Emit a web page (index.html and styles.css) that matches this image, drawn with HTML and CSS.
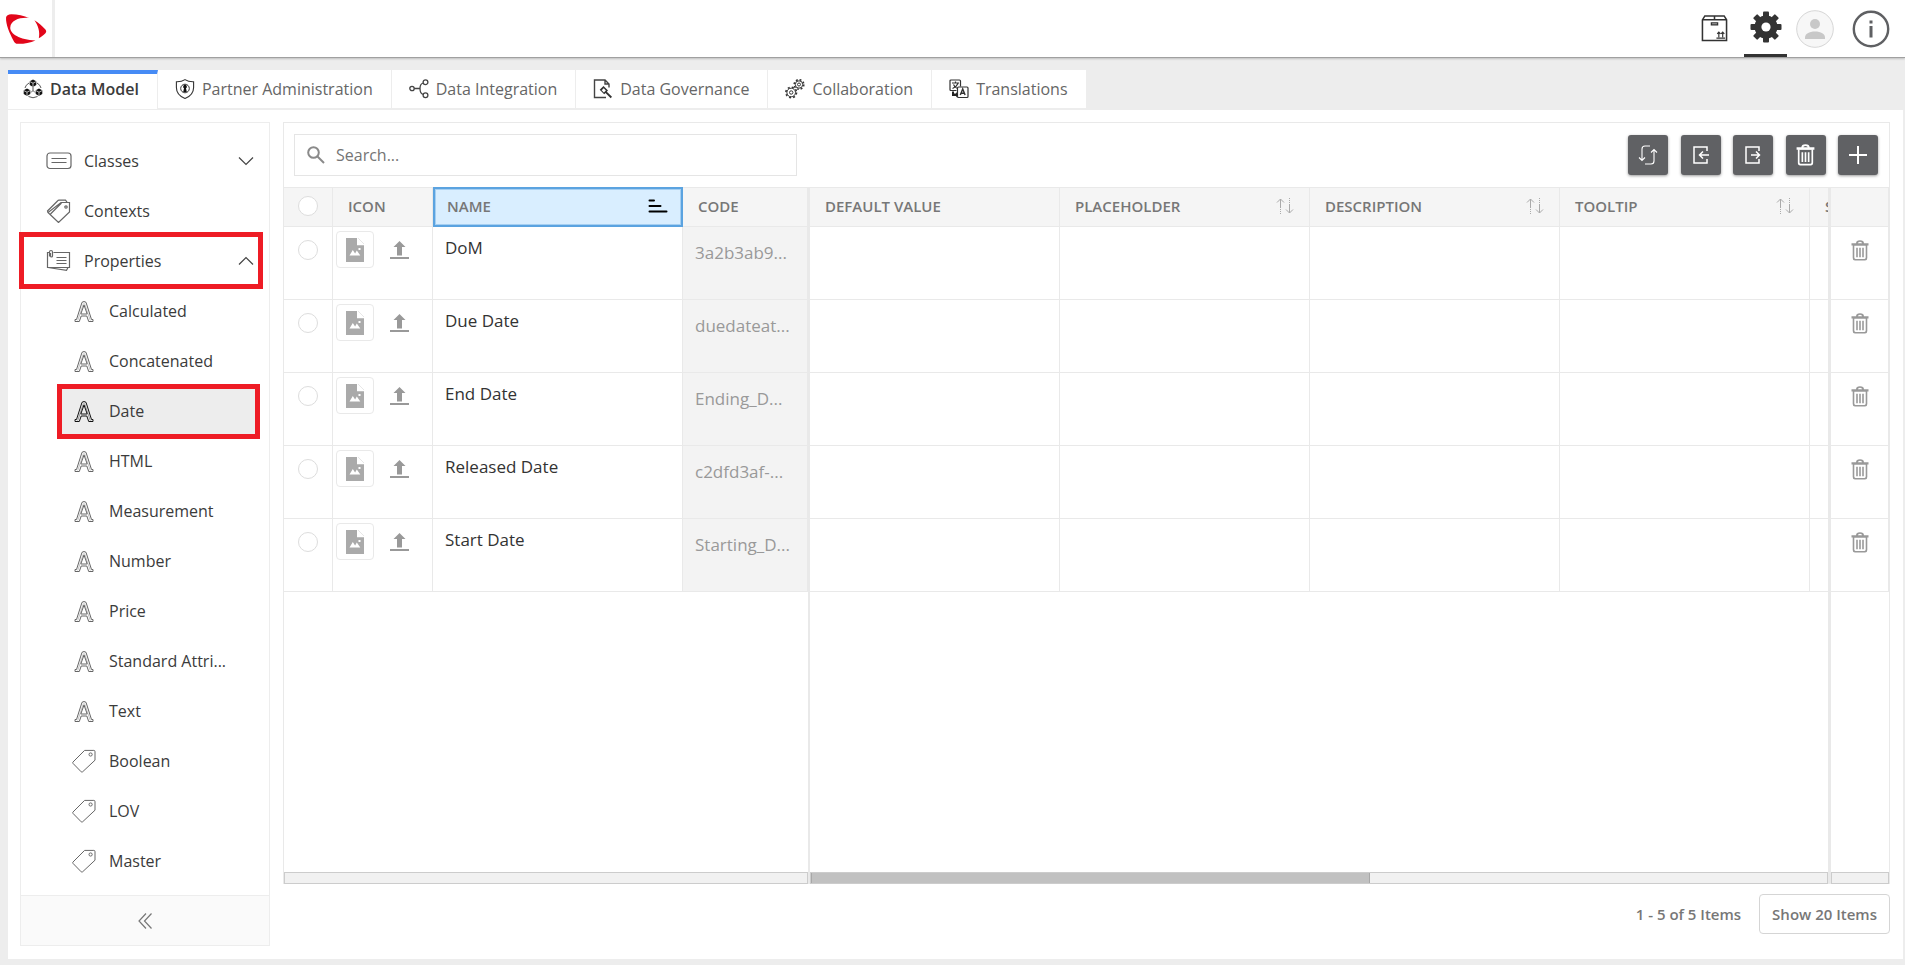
FILE: index.html
```
<!DOCTYPE html>
<html lang="en">
<head>
  <meta charset="UTF-8">
  <meta name="viewport" content="width=device-width, initial-scale=1.0">
  <title>Data Model - Properties</title>
  <link rel="stylesheet" href="styles.css">
</head>
<body>

  <!-- shared icons -->
  <svg class="sprite" aria-hidden="true">
    <symbol id="i-letter" viewBox="0 0 19 21">
      <path d="M7.5 1.3Q9.500-.3 11.500 1.300L17 18.500h1.500v2h-4.300l-1.900-5.500H6.700l-1.900 5.500H.5v-2H2z"/>
      <path d="M9.500 4L6.300 13h6.400z"/>
      <path d="M3.200 19.500L9 2.500M15.800 19.500L10 2.500" stroke-width=".4"/>
    </symbol>
    <symbol id="i-tag" viewBox="0 0 24 24">
      <path d="M12.6 1.4h9.2q1.2 0 1.2 1.2v8.6L10.6 22.8q-.7.6-1.4 0L1 14.4q-.6-.7 0-1.4z"/>
      <circle cx="18.6" cy="5.5" r="1.6"/>
    </symbol>
    <symbol id="i-trash" viewBox="0 0 18 21">
      <path class="solid" d="M.5 3.2h17v2.4H.5zM5 3.4Q5 .2 9 .2t4 3.2h-1.8Q11 1.8 9 1.8T6.8 3.4z"/>
      <path class="solid" fill-rule="evenodd" d="M1.700 5h14.600v13q0 2.500-2.300 2.500H4Q1.700 20.500 1.700 18zM3.300 5.600v12q0 1.300 1.200 1.300h9q1.200 0 1.200-1.300v-12z"/>
      <path class="solid" d="M5.200 7.800h1.600v9.400H5.200zM8.200 7.800h1.600v9.400H8.200zM11.200 7.800h1.600v9.400h-1.600z"/>
    </symbol>
    <symbol id="i-sort" viewBox="0 0 18 16">
      <path d="M4.5 1v9M1 4.5L4.5 1 8 4.5M13.5 6v9M10 11.5l3.500 3.500 3.500-3.500"/>
      <path d="M4.5 11v5M13.5 0v6" stroke-dasharray="1 1"/>
    </symbol>
    <symbol id="i-picture" viewBox="0 0 18 24">
      <path fill="#aaa" d="M0 0h11v7h7v17H0z"/>
      <path fill="#aaa" d="M12 0l6 6h-6z"/>
      <path fill="#fff" d="M11 0h1l6 6v1.200h-7zM3.500 17.500l3.300-5.500 2.300 3.500 1.700-3 3.500 5zM12.500 10h2v2h-2z"/>
    </symbol>
    <symbol id="i-upload" viewBox="0 0 19 18">
      <path fill="#999" d="M0 16h19v2H0zM9.500 0l6 6H12v8.500H7V6H3.500z"/>
    </symbol>
  </svg>

  <header class="topbar">
    <a class="logo" href="#" aria-label="Home">
      <svg width="42" height="30" viewBox="0 0 40 29" preserveAspectRatio="none">
        <path fill="#e2061a" d="M1 3.500C1.200 1.500 3 .2 6 .2c6 0 12 1.300 17 3.600C14 3 5.500 6 5 13c-.3 6 9 12 24 12.500C24 28 17 29 12.500 28.800c-2.500-.1-3.500-1.300-4.500-3.300C4.500 19 .6 10 1 3.500z"/>
        <path fill="#e2061a" d="M28 6c4 2.500 7.500 5.500 10.500 9 1 1.300 1 2.500 0 3.500-2 2-4 3.500-6.300 5C33.500 17 31.500 11 28 6z"/>
      </svg>
    </a>
    <nav class="topbar-actions" aria-label="Account">
      <a href="#" class="top-link" aria-label="Catalog">
        <svg width="27" height="27" viewBox="0 0 28 28" fill="none" stroke="#333" stroke-width="1.6">
          <path d="M1.500 5L4 1h20l2.500 4v21.500h-25zM1.500 5h25M14 1v4"/>
          <rect x="10.800" y="8.200" width="6.400" height="2" stroke-width="1.4"/>
          <path d="M16 24h9M18.500 23v-5M22.500 23v-5M16.800 19.500l1.700-1.800 1.700 1.800M20.800 19.500l1.700-1.800 1.700 1.800" stroke-width="1.2"/>
        </svg>
      </a>
      <a href="#" class="top-link top-link-active" aria-label="Settings">
        <svg width="32" height="32" viewBox="-16 -16 32 32">
          <g fill="#333">
            <rect x="-3" y="-15.500" width="6" height="31" rx="1"/>
            <rect x="-3" y="-15.500" width="6" height="31" rx="1" transform="rotate(45)"/>
            <rect x="-3" y="-15.500" width="6" height="31" rx="1" transform="rotate(90)"/>
            <rect x="-3" y="-15.500" width="6" height="31" rx="1" transform="rotate(135)"/>
            <circle r="11.500"/>
          </g>
          <circle r="4.600" fill="#fff"/>
        </svg>
      </a>
      <a href="#" class="top-link" aria-label="Profile">
        <svg width="38" height="38" viewBox="0 0 38 38">
          <circle cx="19" cy="19" r="18.300" fill="#f7f7f7" stroke="#d6d6d6"/>
          <circle cx="19" cy="14" r="5" fill="#c8c8c8"/>
          <path fill="#c8c8c8" d="M9 29v-1.500c0-3.500 4-6 10-6s10 2.500 10 6V29z"/>
        </svg>
      </a>
      <a href="#" class="top-link" aria-label="Information">
        <svg width="38" height="38" viewBox="0 0 38 38">
          <circle cx="19" cy="19" r="17.200" fill="none" stroke="#5f6063" stroke-width="2.400"/>
          <path fill="#5f6063" d="M17.500 10.500h3v3h-3zM17.500 16h3v11.500h-3z"/>
        </svg>
      </a>
    </nav>
  </header>

  <nav class="tabs" aria-label="Sections">
    <a href="#" class="tab tab-active">
      <svg width="20" height="20" viewBox="0 0 20 20">
        <path fill="none" stroke="#444" stroke-width=".9" d="M6 4Q2.500 6 2 9M14 4q3.500 2 4 5M5.500 17.500q4.500 2.500 9 0M8 13.500l2-2 2 2M10 8v3.500"/>
        <path fill="#111" d="M10 .5l3.300 1.700v3.800L10 8 6.700 6V2.200zM4 9.500l3.300 1.700V15L4 17 .7 15v-3.800zM16 9.500l3.300 1.700V15L16 17l-3.300-2v-3.800z"/>
        <path fill="none" stroke="#fff" stroke-width=".7" d="M6.700 2.500L10 4.200l3.300-1.700M10 4.200V8M.7 11.500L4 13.200l3.300-1.700M4 13.200V17M12.700 11.500l3.300 1.700 3.300-1.700M16 13.200V17"/>
      </svg>
      Data Model
    </a>
    <a href="#" class="tab">
      <svg width="20" height="20" viewBox="0 0 20 20" fill="none" stroke="#333">
        <path d="M10 .6Q13.500 3 18.600 2.800v5.700c0 5.500-3.600 9-8.600 11-5-2-8.600-5.500-8.600-11V2.800Q6.500 3 10 .6z" stroke-width="1.1"/>
        <circle cx="10" cy="9.500" r="4.300"/>
        <path fill="#111" stroke="none" d="M10 5.800a1.900 1.900 0 0 1 1 3.500l.8 3.700H8.200L9 9.300a1.900 1.900 0 0 1 1-3.500z"/>
      </svg>
      Partner Administration
    </a>
    <a href="#" class="tab">
      <svg width="20" height="20" viewBox="0 0 20 20" fill="none" stroke="#444" stroke-width="1.3">
        <circle cx="3" cy="9.500" r="2.200"/>
        <circle cx="16.500" cy="3.200" r="2.400"/>
        <circle cx="16.500" cy="16.300" r="2.400"/>
        <path d="M5.200 9.500H11M14.300 4C11.500 4.800 11 7 11 9.500s.5 5.200 3.300 6"/>
      </svg>
      Data Integration
    </a>
    <a href="#" class="tab">
      <svg width="20" height="20" viewBox="0 0 20 20" fill="none" stroke="#444" stroke-width="1.4">
        <path d="M16 8.500V5l-4-4H1.500v17.500H13M12 1v4h4"/>
        <path fill="#333" stroke="none" d="M10.500 7l4.500 4.500-1.200 1.200 5.200 5-1.300 1.500-5.200-5.200-1.300 1.200-4.500-4.500z"/>
        <path fill="#fff" stroke="none" d="M10.700 9.200l2.200 2.200-2 2-2.200-2.200z"/>
      </svg>
      Data Governance
    </a>
    <a href="#" class="tab">
      <svg width="20" height="20" viewBox="0 0 20 20" fill="none" stroke="#333">
        <circle cx="6.200" cy="13.500" r="4.300"/>
        <circle cx="6.200" cy="13.500" r="5.300" stroke-dasharray="2 2.160" stroke-width="1.600"/>
        <circle cx="6.200" cy="13.500" r="1.700"/>
        <circle cx="14" cy="5.500" r="3.700"/>
        <circle cx="14" cy="5.500" r="4.800" stroke-dasharray="1.900 1.870" stroke-width="1.600"/>
        <circle cx="14" cy="5.500" r="1.500"/>
      </svg>
      Collaboration
    </a>
    <a href="#" class="tab">
      <svg width="20" height="20" viewBox="0 0 20 20" fill="none" stroke="#333">
        <path d="M7.500 11.500H2q-1 0-1-1V2q0-1 1-1h8.500q1 0 1 1v5.500" stroke-width="1.2"/>
        <path d="M3 4h7M6.500 2.500V4M9 4.500Q7.500 8 3.500 9.500M4.500 5.500Q6 8.500 8 9.300" stroke-width="1.2"/>
        <rect x="8.500" y="8" width="10.500" height="10.500" rx="1" stroke-width="1.2"/>
        <path d="M11.300 16l2.400-6 2.400 6M12.200 14.300h3" stroke-width="1.4"/>
        <path fill="#222" stroke="none" d="M3 12.500h2v2h2V13l2 2.700-2 2.700v-1.500H3z"/>
      </svg>
      Translations
    </a>
  </nav>

  <main class="panel">
    <aside class="sidebar">
      <nav class="side-list" aria-label="Data model">
        <a href="#" class="side-item">
          <svg width="26" height="24" viewBox="0 0 26 24"><rect x="1" y="4" width="24" height="15.500" rx="3"/><path d="M5.500 9.500h15M5.500 13.500h15"/></svg>
          <span>Classes</span>
          <svg class="chevron" width="16" height="10" viewBox="0 0 16 10"><path d="M1 1.500l7 7 7-7"/></svg>
        </a>
        <a href="#" class="side-item">
          <svg width="26" height="24" viewBox="0 0 26 24"><path d="M15 3.500h8.500V13L12.500 23.500 2 13.500zM2 13.500L1.500 12 11.500 2q.6-.8 1.500-.8h6.500l1.500 2M4.500 15L15.500 4"/><circle cx="20" cy="8" r="1.200"/></svg>
          <span>Contexts</span>
        </a>
        <a href="#" class="side-item side-item-marked">
          <svg width="26" height="24" viewBox="0 0 26 24"><path d="M7.500 3.500h16v15h-22v-15h2M2 18.500l18.500 2.800 1.500-2.800M10.500 8.500h10M10.500 11.500h10M10.500 14.500h10M3.500 7.500V3q0-1.500 1.500-1.500T6.500 3v4q0 1-1 1t-1-1V4"/></svg>
          <span>Properties</span>
          <svg class="chevron" width="16" height="10" viewBox="0 0 16 10"><path d="M1 8.500l7-7 7 7"/></svg>
        </a>
        <a href="#" class="side-item side-sub"><svg width="26" height="21"><use href="#i-letter"/></svg><span>Calculated</span></a>
        <a href="#" class="side-item side-sub"><svg width="26" height="21"><use href="#i-letter"/></svg><span>Concatenated</span></a>
        <a href="#" class="side-item side-sub side-sub-active"><svg width="26" height="21"><use href="#i-letter"/></svg><span>Date</span></a>
        <a href="#" class="side-item side-sub"><svg width="26" height="21"><use href="#i-letter"/></svg><span>HTML</span></a>
        <a href="#" class="side-item side-sub"><svg width="26" height="21"><use href="#i-letter"/></svg><span>Measurement</span></a>
        <a href="#" class="side-item side-sub"><svg width="26" height="21"><use href="#i-letter"/></svg><span>Number</span></a>
        <a href="#" class="side-item side-sub"><svg width="26" height="21"><use href="#i-letter"/></svg><span>Price</span></a>
        <a href="#" class="side-item side-sub"><svg width="26" height="21"><use href="#i-letter"/></svg><span>Standard Attri...</span></a>
        <a href="#" class="side-item side-sub"><svg width="26" height="21"><use href="#i-letter"/></svg><span>Text</span></a>
        <a href="#" class="side-item side-sub"><svg width="26" height="24"><use href="#i-tag"/></svg><span>Boolean</span></a>
        <a href="#" class="side-item side-sub"><svg width="26" height="24"><use href="#i-tag"/></svg><span>LOV</span></a>
        <a href="#" class="side-item side-sub"><svg width="26" height="24"><use href="#i-tag"/></svg><span>Master</span></a>
      </nav>
      <button class="collapse" aria-label="Collapse sidebar">
        <svg width="14" height="16" viewBox="0 0 14 16"><path d="M8 .5L1 8l7 7.500M13.500.5l-7 7.500 7 7.500"/></svg>
      </button>
    </aside>

    <section class="content">
      <div class="grid-box">
        <div class="toolbar">
          <label class="search">
            <svg width="18" height="18" viewBox="0 0 18 18"><circle cx="6.500" cy="6.500" r="5.300"/><path d="M10.500 10.500l6.500 6.500"/></svg>
            <input type="text" placeholder="Search..." aria-label="Search">
          </label>
          <div class="tools">
            <button class="tool" aria-label="Refresh">
              <svg width="20" height="20" viewBox="0 0 20 20" stroke-width="1.1"><path d="M12 1H7Q4 1 4 4v11.500M1 12.500l3 3 3-3M7 19h6q3 0 3-3V4.500M13 7.500l3-3 3 3"/></svg>
            </button>
            <button class="tool" aria-label="Import">
              <svg width="20" height="20" viewBox="0 0 20 20" stroke-width="1.5"><path d="M16 6V2H3v16h13v-4M18 10H9M12 6.500L8.500 10l3.500 3.500"/></svg>
            </button>
            <button class="tool" aria-label="Export">
              <svg width="20" height="20" viewBox="0 0 20 20" stroke-width="1.5"><path d="M16 6V2H3v16h13v-4M8 10h8.500M13 6.500l3.500 3.500-3.500 3.500"/></svg>
            </button>
            <button class="tool" aria-label="Delete">
              <svg class="trash-light" width="19" height="22"><use href="#i-trash"/></svg>
            </button>
            <button class="tool" aria-label="Add">
              <svg width="20" height="20" viewBox="0 0 20 20" stroke-width="2"><path d="M10 1v18M1 10h18"/></svg>
            </button>
          </div>
        </div>

        <div class="panes">
          <div class="pane pane-left">
            <table class="grid">
              <colgroup><col class="c-check"><col class="c-icon"><col class="c-wide"><col class="c-code"></colgroup>
              <thead>
                <tr>
                  <th class="check"><input type="checkbox" aria-label="Select all"></th>
                  <th>ICON</th>
                  <th class="sorted"><div class="th-inner">NAME
                    <button class="sort" aria-label="Sort by name"><svg width="20" height="14" viewBox="0 0 20 14"><path fill="none" stroke="#000" stroke-width="2" stroke-linecap="round" d="M1.500 1.500h4.500M1.500 7h11M1.500 12.500h17"/></svg></button></div></th>
                  <th>CODE</th>
                </tr>
              </thead>
              <tbody>
                <tr>
                  <td class="check"><input type="checkbox" aria-label="Select DoM"></td>
                  <td class="icons"><div><button class="thumb" aria-label="Icon"><svg width="18" height="24"><use href="#i-picture"/></svg></button><button class="upload" aria-label="Upload"><svg width="19" height="18"><use href="#i-upload"/></svg></button></div></td>
                  <td class="name">DoM</td>
                  <td class="code">3a2b3ab9...</td>
                </tr>
                <tr>
                  <td class="check"><input type="checkbox" aria-label="Select Due Date"></td>
                  <td class="icons"><div><button class="thumb" aria-label="Icon"><svg width="18" height="24"><use href="#i-picture"/></svg></button><button class="upload" aria-label="Upload"><svg width="19" height="18"><use href="#i-upload"/></svg></button></div></td>
                  <td class="name">Due Date</td>
                  <td class="code">duedateat...</td>
                </tr>
                <tr>
                  <td class="check"><input type="checkbox" aria-label="Select End Date"></td>
                  <td class="icons"><div><button class="thumb" aria-label="Icon"><svg width="18" height="24"><use href="#i-picture"/></svg></button><button class="upload" aria-label="Upload"><svg width="19" height="18"><use href="#i-upload"/></svg></button></div></td>
                  <td class="name">End Date</td>
                  <td class="code">Ending_D...</td>
                </tr>
                <tr>
                  <td class="check"><input type="checkbox" aria-label="Select Released Date"></td>
                  <td class="icons"><div><button class="thumb" aria-label="Icon"><svg width="18" height="24"><use href="#i-picture"/></svg></button><button class="upload" aria-label="Upload"><svg width="19" height="18"><use href="#i-upload"/></svg></button></div></td>
                  <td class="name">Released Date</td>
                  <td class="code">c2dfd3af-...</td>
                </tr>
                <tr>
                  <td class="check"><input type="checkbox" aria-label="Select Start Date"></td>
                  <td class="icons"><div><button class="thumb" aria-label="Icon"><svg width="18" height="24"><use href="#i-picture"/></svg></button><button class="upload" aria-label="Upload"><svg width="19" height="18"><use href="#i-upload"/></svg></button></div></td>
                  <td class="name">Start Date</td>
                  <td class="code">Starting_D...</td>
                </tr>
              </tbody>
            </table>
            <div class="scrollbar"></div>
          </div>

          <div class="pane pane-center">
            <table class="grid">
              <colgroup><col class="c-wide"><col class="c-wide"><col class="c-wide"><col class="c-wide"><col class="c-wide"></colgroup>
              <thead>
                <tr>
                  <th>DEFAULT VALUE</th>
                  <th><div class="th-inner">PLACEHOLDER <button class="sort" aria-label="Sort by placeholder"><svg width="18" height="16"><use href="#i-sort"/></svg></button></div></th>
                  <th><div class="th-inner">DESCRIPTION <button class="sort" aria-label="Sort by description"><svg width="18" height="16"><use href="#i-sort"/></svg></button></div></th>
                  <th><div class="th-inner">TOOLTIP <button class="sort" aria-label="Sort by tooltip"><svg width="18" height="16"><use href="#i-sort"/></svg></button></div></th>
                  <th>S</th>
                </tr>
              </thead>
              <tbody>
                <tr><td></td><td></td><td></td><td></td><td></td></tr>
                <tr><td></td><td></td><td></td><td></td><td></td></tr>
                <tr><td></td><td></td><td></td><td></td><td></td></tr>
                <tr><td></td><td></td><td></td><td></td><td></td></tr>
                <tr><td></td><td></td><td></td><td></td><td></td></tr>
              </tbody>
            </table>
            <div class="scrollbar"><div class="thumb-bar"></div></div>
          </div>

          <div class="pane pane-right">
            <table class="grid">
              <thead><tr><th></th></tr></thead>
              <tbody>
                <tr><td class="remove"><button aria-label="Delete DoM"><svg width="18" height="21"><use href="#i-trash"/></svg></button></td></tr>
                <tr><td class="remove"><button aria-label="Delete Due Date"><svg width="18" height="21"><use href="#i-trash"/></svg></button></td></tr>
                <tr><td class="remove"><button aria-label="Delete End Date"><svg width="18" height="21"><use href="#i-trash"/></svg></button></td></tr>
                <tr><td class="remove"><button aria-label="Delete Released Date"><svg width="18" height="21"><use href="#i-trash"/></svg></button></td></tr>
                <tr><td class="remove"><button aria-label="Delete Start Date"><svg width="18" height="21"><use href="#i-trash"/></svg></button></td></tr>
              </tbody>
            </table>
            <div class="scrollbar"></div>
          </div>
        </div>
      </div>

      <footer class="pager">
        <span>1 - 5 of 5 Items</span>
        <button class="page-size">Show 20 Items</button>
      </footer>
    </section>
  </main>

</body>
</html>
```
FILE: styles.css
```
* {
  box-sizing: border-box;
}

body {
  margin: 0;
  min-height: 100vh;
  display: flex;
  flex-direction: column;
  background-color: #ededed;
  color: #3b3b3b;
  font-family: "Open Sans", sans-serif;
  font-size: 16px;
}

a {
  color: inherit;
  text-decoration: none;
}

button {
  padding: 0;
  border: none;
  background: none;
  font: inherit;
  color: inherit;
  cursor: pointer;
}

svg {
  display: block;
  flex-shrink: 0;
}

.sprite {
  display: none;
}

/* top bar */
.topbar {
  display: flex;
  justify-content: space-between;
  height: 58px;
  background-color: #fff;
  border-bottom: 1px solid #a0a0a0;
  box-shadow: 0 1px 2px rgba(0, 0, 0, 0.2);
}

.logo {
  display: flex;
  align-items: center;
  width: 55px;
  padding-left: 5px;
  border-right: 3px solid #ededed;
}

.topbar-actions {
  display: flex;
  padding-right: 6px;
}

.top-link {
  display: flex;
  align-items: center;
  justify-content: center;
  padding: 0 9px;
}

.top-link-active {
  width: 43px;
  margin-left: 7px;
  padding: 0 0 3px;
  border-top: 3px solid #fff;
  border-bottom: 3px solid #333;
}

/* tabs */
.tabs {
  display: flex;
  height: 40px;
  margin: 12px 8px 0;
}

.tab {
  display: flex;
  align-items: center;
  gap: 7px;
  padding: 0 17px;
  height: 38px;
  background-color: #fff;
  border-right: 1px solid #ededed;
  color: #666;
  white-space: nowrap;
}

.tab:not(.tab-active) {
  padding-right: 18px;
}

.tab-active {
  height: 39px;
  padding: 0 18px 5px 15px;
  border-top: 4px solid #468bf5;
  color: #3b3b3b;
  font-weight: 600;
}

/* page panel */
.panel {
  flex: 1;
  display: flex;
  gap: 13px;
  margin: 0 2px 6px 8px;
  padding: 12px 13px 13px 12px;
  background-color: #fff;
}

.sidebar {
  display: flex;
  flex-direction: column;
  width: 250px;
  border: 1px solid #ededed;
}

.side-list {
  flex: 1;
  padding: 13px 0 7px;
}

.side-item {
  position: relative;
  display: flex;
  align-items: center;
  gap: 12px;
  height: 50px;
  padding: 0 15px 0 25px;
}

.side-item svg {
  fill: none;
  stroke: #666;
  stroke-width: 1.2;
}

.side-item .chevron {
  margin-left: auto;
  stroke: #444;
}

.side-item.side-sub {
  padding-left: 50px;
}

.side-sub svg {
  stroke-width: 1;
}

/* red frames round the current group and entry */
.side-item-marked::after,
.side-sub-active::before {
  content: "";
  position: absolute;
  border: 5px solid #ee1c25;
}

.side-item-marked::after {
  inset: -4px 6px -3px -2px;
}

.side-sub-active::before {
  inset: -2px 9px -3px 36px;
  background-color: #ededed;
}

.side-sub-active svg,
.side-sub-active span {
  position: relative;
}

.side-sub-active svg {
  stroke: #111;
}

.collapse {
  display: flex;
  align-items: center;
  justify-content: center;
  height: 50px;
  background-color: #fafafa;
  border-top: 1px solid #ededed;
}

.collapse svg {
  fill: none;
  stroke: #777;
  stroke-width: 1.2;
}

/* grid */
.content {
  flex: 1;
  min-width: 0;
  display: flex;
  flex-direction: column;
}

.grid-box {
  flex: 1;
  display: flex;
  flex-direction: column;
  border: 1px solid #e9e9e9;
  border-bottom: none;
}

.toolbar {
  display: flex;
  justify-content: space-between;
  align-items: center;
  height: 64px;
  padding: 0 11px 0 10px;
}

.search {
  display: flex;
  align-items: center;
  gap: 11px;
  width: 503px;
  height: 42px;
  padding: 0 12px;
  border: 1px solid #e5e5e5;
}

.search svg {
  fill: none;
  stroke: #8a8a8a;
  stroke-width: 2;
}

.search input {
  flex: 1;
  border: none;
  outline: none;
  padding: 0;
  font: inherit;
}

.search input::placeholder {
  color: #757575;
}

.tools {
  display: flex;
  justify-content: space-between;
  width: 250px;
}

.tool {
  display: flex;
  align-items: center;
  justify-content: center;
  width: 40px;
  height: 40px;
  background-color: #606164;
  border-radius: 3px;
  box-shadow: 0 1px 3px rgba(0, 0, 0, 0.4);
}

.tool svg {
  fill: none;
  stroke: #fff;
}

.tool .trash-light {
  fill: #fff;
  stroke: none;
}

.panes {
  flex: 1;
  display: flex;
}

.pane {
  display: flex;
  flex-direction: column;
  justify-content: space-between;
}

.pane-left {
  width: 526px;
  border-right: 2px solid #e9e9e9;
}

.pane-center {
  flex: 1;
  min-width: 0;
  overflow: hidden;
  border-right: 2px solid #e9e9e9;
}

.pane-right {
  width: 59px;
  border-left: 1px solid #e9e9e9;
}

.grid {
  table-layout: fixed;
  width: 100%;
  border-collapse: separate;
  border-spacing: 0;
}

.pane-left .grid {
  width: 524px;
}

.pane-center .grid {
  width: 1250px;
}

.c-check {
  width: 49px;
}

.c-icon {
  width: 100px;
}

.c-wide {
  width: 250px;
}

.c-code {
  width: 125px;
}

.grid th {
  height: 40px;
  padding: 0 15px 3px;
  background-color: #f5f5f5;
  border: solid #e9e9e9;
  border-width: 1px 1px 1px 0;
  color: #777;
  font-size: 15px;
  font-weight: 600;
  line-height: 20px;
  text-align: left;
}

.th-inner {
  display: flex;
  align-items: center;
  justify-content: space-between;
}

.grid th.sorted {
  padding: 0 13px 3px 12px;
  background-color: #d9eeff;
  border: 2px solid #5ba3e0;
  box-shadow: inset 0 0 0 1px #a5cff2;
}

.sort svg {
  fill: none;
  stroke: #aaa;
}

.grid td {
  height: 73px;
  padding: 0;
  border: solid #e9e9e9;
  border-width: 0 1px 1px 0;
  vertical-align: top;
}

.grid .check {
  padding: 0;
  text-align: center;
}

.grid th.check {
  padding-bottom: 2px;
}

.grid td.check {
  padding-top: 13px;
}

.check input {
  appearance: none;
  display: block;
  width: 20px;
  height: 20px;
  margin: 0 auto;
  border: 1px solid #ddd;
  border-radius: 50%;
  background-color: #fff;
}

.icons div {
  display: flex;
  align-items: center;
  gap: 16px;
  padding: 4px 3px;
}

.thumb {
  display: flex;
  align-items: center;
  justify-content: center;
  width: 38px;
  height: 37px;
  border: 1px solid #e9e9e9;
  border-radius: 4px;
}

.grid td.name {
  padding: 9px 12px;
  color: #333;
  font-size: 17px;
}

.grid td.code {
  padding: 14px 12px;
  background-color: #f3f3f3;
  color: #999;
  font-size: 17px;
}

.remove button {
  display: block;
  margin: 13px auto 0;
}

.remove svg {
  fill: #999;
}

.scrollbar {
  height: 12px;
  background-color: #f1f1f1;
  border: 1px solid #ccc;
}

.thumb-bar {
  width: 55%;
  height: 10px;
  background-color: #c1c1c1;
  border: solid #a8a8a8;
  border-width: 0 1px;
}

/* pager */
.pager {
  display: flex;
  align-items: center;
  justify-content: flex-end;
  gap: 18px;
  padding: 10px 0 12px;
  color: #777;
  font-size: 15px;
  font-weight: 600;
}

.page-size {
  height: 40px;
  padding: 0 12px;
  border: 1px solid #d5d5d5;
  border-radius: 4px;
}
```
